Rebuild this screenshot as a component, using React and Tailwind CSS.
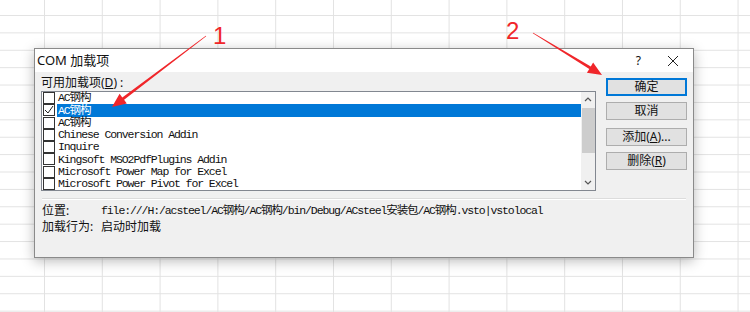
import React from 'react';

const mono = "font-['Liberation_Mono','Noto_Sans_CJK_SC',monospace] text-[11.5px] tracking-[-1.1px]";
const ui = "font-['Noto_Sans','Noto_Sans_CJK_SC',sans-serif]";

const items = [
  { name: 'AC钢构', checked: false },
  { name: 'AC钢构', checked: true, selected: true },
  { name: 'AC钢构', checked: false },
  { name: 'Chinese Conversion Addin', checked: false },
  { name: 'Inquire', checked: false },
  { name: 'Kingsoft MSO2PdfPlugins Addin', checked: false },
  { name: 'Microsoft Power Map for Excel', checked: false },
  { name: 'Microsoft Power Pivot for Excel', checked: false },
];

const Row = ({ item }) => (
  <div className="flex items-center h-[12.25px]">
    <div className="ml-[1px] w-[12px] h-[12px] border border-[#333] bg-white flex items-center justify-center shrink-0">
      {item.checked && (
        <svg width="10" height="10" viewBox="0 0 10 10">
          <path d="M1 5 L4 8 L9 1" fill="none" stroke="#222" strokeWidth="1" />
        </svg>
      )}
    </div>
    <div
      className={`ml-[2px] flex-1 h-full flex items-center pl-[1px] leading-none whitespace-nowrap ${mono} ${
        item.selected ? 'bg-[#0078d7] text-white' : 'text-[#111]'
      }`}
    >
      {item.name}
    </div>
  </div>
);

const Btn = ({ children, primary, className = '' }) => (
  <div
    className={`w-[81px] h-[18px] flex items-center justify-center bg-[#e1e1e1] text-[12px] text-[#111] leading-none ${ui} ${
      primary ? 'border-2 border-[#0078d7]' : 'border border-[#adadad]'
    } ${className}`}
  >
    {children}
  </div>
);

const App = () => {
  return (
    <div className="relative w-[750px] h-[312px] overflow-hidden bg-white bg-[linear-gradient(to_right,#e2e2e2_1px,transparent_1px),linear-gradient(to_bottom,#e2e2e2_1px,transparent_1px)] bg-[size:57.8px_17.4px] bg-[position:44px_15px] pt-[48px] pl-[34px]">
      {/* dialog */}
      <div className="w-[660px] h-[210px] border border-[#8a8a8a] bg-[#f0f0f0] shadow-[0_3px_12px_rgba(0,0,0,0.28)] flex flex-col">
        {/* title bar */}
        <div className={`h-[23px] bg-white flex items-center pl-[2px] text-[13px] text-[#111] ${ui}`}>
          <span>COM 加载项</span>
          <span className="ml-auto mr-[26px] text-[12px]">?</span>
          <svg width="12" height="12" viewBox="0 0 12 12" className="mr-[14px]">
            <path d="M1 1 L11 11 M11 1 L1 11" stroke="#222" strokeWidth="1" />
          </svg>
        </div>

        {/* body */}
        <div className="flex px-[6px]">
          <div className="w-[555px] flex flex-col">
            <div className={`h-[19px] pt-[3px] flex items-center text-[12px] text-[#111] leading-none ${ui}`}>
              可用加载项(<span className="underline">D</span>) :
            </div>
            <div className="h-[100px] border border-[#828790] bg-white flex">
              <div className="flex-1 flex flex-col">
                {items.map((item, i) => (
                  <Row key={i} item={item} />
                ))}
              </div>
              <div className="w-[14px] bg-[#f0f0f0] flex flex-col items-center">
                <svg width="8" height="14" viewBox="0 0 8 14">
                  <path d="M1 9 L4 6 L7 9" fill="none" stroke="#555" strokeWidth="1.2" />
                </svg>
                <div className="mt-[2px] w-[13px] h-[45px] bg-[#cdcdcd]" />
                <div className="flex-1" />
                <svg width="8" height="14" viewBox="0 0 8 14">
                  <path d="M1 5 L4 8 L7 5" fill="none" stroke="#555" strokeWidth="1.2" />
                </svg>
              </div>
            </div>
          </div>
          <div className="ml-[10px] mt-[6px] flex flex-col">
            <Btn primary>确定</Btn>
            <Btn className="mt-[6px]">取消</Btn>
            <Btn className="mt-[8px]">
              添加(<span className="underline">A</span>)...
            </Btn>
            <Btn className="mt-[6px]">
              删除(<span className="underline">R</span>)
            </Btn>
          </div>
        </div>

        {/* separator */}
        <div className="mx-[7px] mt-[7px] h-[1px] bg-[#dcdcdc] border-b border-white box-content" />

        {/* info */}
        <div className="px-[7px] pt-[3px] flex flex-col text-[#111]">
          <div className="flex items-center h-[16px] whitespace-nowrap">
            <span className={`w-[59px] shrink-0 text-[12px] leading-none ${ui}`}>位置:</span>
            <span className={`leading-none ${mono}`}>
              file:///H:/acsteel/AC钢构/AC钢构/bin/Debug/ACsteel安装包/AC钢构.vsto|vstolocal
            </span>
          </div>
          <div className="flex items-center h-[16px] whitespace-nowrap">
            <span className={`w-[59px] shrink-0 text-[12px] leading-none ${ui}`}>加载行为:</span>
            <span className={`text-[12px] leading-none ${ui}`}>启动时加载</span>
          </div>
        </div>
      </div>

      {/* annotations */}
      <span className="absolute left-[213px] top-[24px] text-[24px] leading-none text-[#f0262a] font-['Liberation_Sans',sans-serif]">
        1
      </span>
      <span className="absolute left-[506px] top-[19px] text-[24px] leading-none text-[#f0262a] font-['Liberation_Sans',sans-serif]">
        2
      </span>
      <svg className="absolute left-0 top-0 pointer-events-none" width="750" height="312" viewBox="0 0 750 312">
        <polygon
          points="206.2,36.2 124.1,99.8 126.8,103.4 112,107 119.6,93.8 122.3,97.4 205.8,35.8"
          fill="#f0262a"
        />
        <polygon
          points="532.8,33.3 589.3,69.0 586.9,72.8 602,75 593.1,62.6 590.8,66.4 533.2,32.7"
          fill="#f0262a"
        />
      </svg>
    </div>
  );
};

export default App;
